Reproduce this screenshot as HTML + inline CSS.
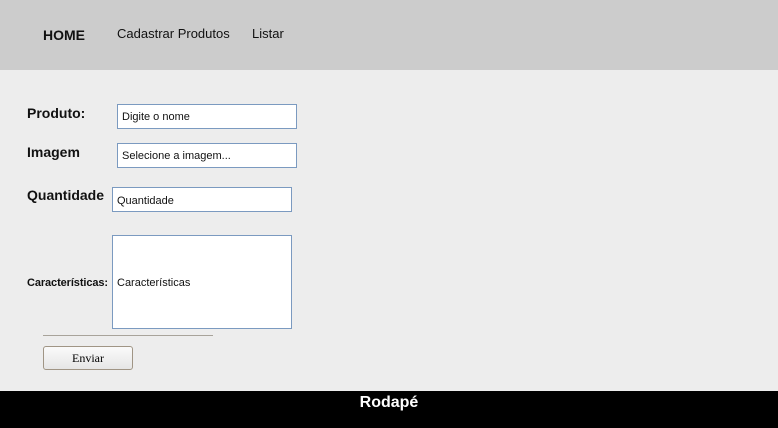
<!DOCTYPE html>
<html><head><meta charset="utf-8"><style>
body{margin:0;width:778px;height:428px;background:#ededed;font-family:"Liberation Sans",sans-serif;position:relative;overflow:hidden}
.hdr{position:absolute;left:0;top:0;width:778px;height:70px;background:#cccccc}
.a{position:absolute;font-size:13px;color:#111}
.lbl{position:absolute;font-weight:bold;font-size:14px;color:#111}
.in{position:absolute;background:#fff;border:1px solid #7b9ac0;box-sizing:border-box;font-size:11px;color:#111;padding-left:4px}
.ft{position:absolute;left:0;top:391px;width:778px;height:37px;background:#000;color:#fff;font-weight:bold;font-size:16px;text-align:center;line-height:24px}
</style></head><body>
<div class="hdr"></div>
<div class="a" style="left:43px;top:27px;font-weight:bold;font-size:14px">HOME</div>
<div class="a" style="left:117px;top:26px">Cadastrar Produtos</div>
<div class="a" style="left:252px;top:26px">Listar</div>
<div class="lbl" style="left:27px;top:105px">Produto:</div>
<div class="in" style="left:117px;top:104px;width:180px;height:25px;line-height:25px">Digite o nome</div>
<div class="lbl" style="left:27px;top:144px">Imagem</div>
<div class="in" style="left:117px;top:143px;width:180px;height:25px;line-height:25px">Selecione a imagem...</div>
<div class="lbl" style="left:27px;top:187px">Quantidade</div>
<div class="in" style="left:112px;top:187px;width:180px;height:25px;line-height:26px">Quantidade</div>
<div class="a" style="left:27px;top:277px;font-size:11px;font-weight:bold;letter-spacing:-0.1px">Características:</div>
<div class="in" style="left:112px;top:235px;width:180px;height:94px;line-height:94px;padding-left:4px">Características</div>
<div style="position:absolute;left:43px;top:335px;width:170px;height:1px;background:#a8a39a"></div>
<div style="position:absolute;left:43px;top:346px;width:90px;height:24px;box-sizing:border-box;border:1px solid #a09585;border-radius:3px;background:linear-gradient(#fafafa,#e6e6e6);font-family:'Liberation Serif',serif;font-size:12px;text-align:center;line-height:22px">Enviar</div>
<div class="ft">Rodapé</div>
</body></html>
